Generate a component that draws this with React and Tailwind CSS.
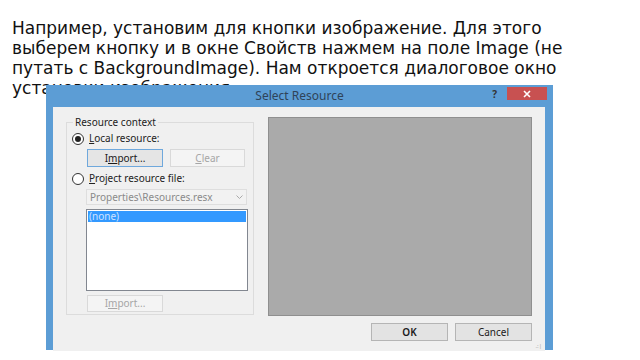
import React from 'react';

const ui = { fontFamily: '"Noto Sans", "Open Sans", sans-serif' };

function Radio({ checked }) {
  return (
    <span className="w-[12px] h-[12px] rounded-full border border-[#333] bg-white flex items-center justify-center shrink-0">
      {checked && <span className="w-[6px] h-[6px] rounded-full bg-[#222]" />}
    </span>
  );
}

function Btn({ children, className = '', disabled, focused }) {
  const tone = disabled
    ? 'border-[#d9d9d9] bg-[#f4f4f4] text-[#a6a6a6]'
    : focused
    ? 'border-[#6fa8dc] bg-[#e5e5e5] text-[#1a1a1a]'
    : 'border-[#b5b5b5] bg-[#e3e3e3] text-[#1a1a1a]';
  return (
    <div className={`h-[18px] border flex items-center justify-center text-[10px] ${tone} ${className}`}>
      {children}
    </div>
  );
}

function Dialog() {
  return (
    <div className="absolute left-[46px] top-[85px] w-[507px] h-[265px] bg-[#5c9dd5] flex flex-col" style={ui}>
      <div className="h-[22px] shrink-0 flex items-center relative">
        <div className="flex-1 text-center text-[12px] text-[#2f4358]">Select Resource</div>
        <div className="absolute right-[6px] top-[2px] flex items-center gap-[10px]">
          <span className="text-[10px] font-bold text-[#333] leading-none">?</span>
          <div className="w-[40px] h-[13px] bg-[#c85151] flex items-center justify-center">
            <svg width="8" height="8" viewBox="0 0 8 8">
              <path d="M1 1L7 7M7 1L1 7" stroke="#fff" strokeWidth="1.6" />
            </svg>
          </div>
        </div>
      </div>
      <div className="flex-1 ml-[7px] mr-[8px] bg-[#f0f0f0] flex flex-col px-[13px] pt-[10px] pb-[10px] relative">
        <div className="flex gap-[14px]">
          <fieldset className="w-[187px] h-[198px] border border-[#dcdcdc] px-[5px] pb-[2px] flex flex-col">
            <legend className="text-[10px] text-[#222] px-[2px] ml-[1px] leading-none">Resource context</legend>
            <div className="flex items-center gap-[5px] mt-[4px] h-[15px] text-[10px] text-[#222]">
              <Radio checked />
              <span><u>L</u>ocal resource:</span>
            </div>
            <div className="flex gap-[7px] mt-[3px] ml-[15px]">
              <Btn focused className="w-[76px]">I<u>m</u>port...</Btn>
              <Btn disabled className="w-[75px]"><u>C</u>lear</Btn>
            </div>
            <div className="flex items-center gap-[5px] mt-[4px] h-[15px] text-[10px] text-[#222]">
              <Radio />
              <span><u>P</u>roject resource file:</span>
            </div>
            <div className="mt-[3px] ml-[14px] w-[161px] h-[16px] border border-[#dedede] bg-[#f2f2f2] flex items-center justify-between px-[3px] text-[10px] text-[#8a8a8a]">
              <span>Properties\Resources.resx</span>
              <svg width="7" height="5" viewBox="0 0 7 5">
                <path d="M0.5 0.5L3.5 3.5L6.5 0.5" fill="none" stroke="#aaa" strokeWidth="1" />
              </svg>
            </div>
            <div className="mt-[4px] ml-[14px] w-[162px] h-[84px] border border-[#828790] bg-white p-[1px]">
              <div className="h-[11px] bg-[#3399ff] text-[10px] leading-[11px] text-[#cfe3ff] px-[1px]">(none)</div>
            </div>
            <Btn disabled className="w-[76px] mt-[4px] ml-[15px]">I<u>m</u>port...</Btn>
          </fieldset>
          <div className="flex-1 h-[199px] bg-[#aaaaaa] border border-[#8f8f8f]" />
        </div>
        <div className="flex justify-end gap-[7px] mt-[7px]">
          <Btn className="w-[77px] font-semibold">OK</Btn>
          <Btn className="w-[77px]">Cancel</Btn>
        </div>
        <div className="absolute right-[3px] bottom-[2px] text-[6px] leading-none text-[#aaa]">.:|</div>
      </div>
    </div>
  );
}

export default function App() {
  return (
    <div className="w-[640px] h-[360px] bg-white relative overflow-hidden">
      <p
        className="pl-[12px] pt-[18px] text-[17px] leading-[20px] text-[#111]"
        style={{ fontFamily: '"DejaVu Sans", sans-serif' }}
      >
        Например, установим для кнопки изображение. Для этого<br />
        выберем кнопку и в окне Свойств нажмем на поле Image (не<br />
        путать с BackgroundImage). Нам откроется диалоговое окно<br />
        установки изображения.
      </p>
      <Dialog />
    </div>
  );
}
